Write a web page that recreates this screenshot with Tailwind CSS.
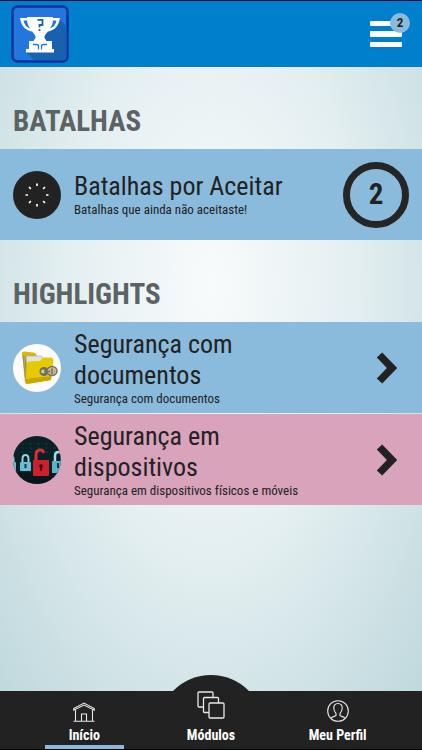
<!DOCTYPE html>
<html lang="pt">
<head>
<meta charset="utf-8">
<meta name="viewport" content="width=device-width, initial-scale=1">
<title>Batalhas</title>
<script src="https://cdn.jsdelivr.net/npm/@tailwindcss/browser@4"></script>
</head>
<body class="min-h-screen flex flex-col text-[#222222] font-['Roboto_Condensed','Liberation_Sans_Narrow',Roboto,sans-serif] bg-[radial-gradient(ellipse_75%_80%_at_50%_38%,#f8fbfc_0%,#e4eff1_45%,#bcd6da_100%)]">

<header class="flex items-center justify-between h-[67px] border-t border-[#08143f] bg-[#007fcd] pl-[11px] pr-5">
  <a href="#" aria-label="Início da aplicação">
    <svg class="block w-[58px] h-[58px]" viewBox="0 0 58 58">
      <rect x="1.5" y="1.5" width="55" height="55" rx="5" fill="#2377dc" stroke="#07339b" stroke-width="2.5"/>
      <path d="M48 14 55.300 21V52q0 3.300-3 3.300H23L15 47 30 35z" fill="#1761b0"/>
      <path d="M16 12H42V13H49C48 21 43 25.500 37 26.500C34.500 29 33 31 33.500 33L35.500 36H41V44H43V47.500H15V44H18V36H22.500L24.500 33C25 31 23.500 29 21 26.500C15 25.500 10 21 9 13H16z" fill="#fff"/>
      <path d="M12.500 15.500H16C16.500 19 17.500 21 19 23.500C15.500 22 13.500 20 12.500 15.500zM45.500 15.500H42C41.500 19 40.500 21 39 23.500C42.500 22 44.500 20 45.500 15.500z" fill="#2377dc"/>
      <path d="M26.500 14.800H31.500V20H28.500V22.500M28.500 24V26" fill="none" stroke="#1c62bb" stroke-width="1.800"/>
      <path d="M22 39.500H25.500Q27.500 39.500 27.500 41.500V44.500M36 39.500H32.500Q30.500 39.500 30.500 41.500V44.500" fill="none" stroke="#2377dc" stroke-width="1.300"/>
    </svg>
  </a>
  <button type="button" aria-label="Menu, 2 notificações" class="relative flex flex-col gap-[5px] w-8">
    <span class="block h-[5px] w-full rounded-[1px] bg-white"></span>
    <span class="block h-[6px] w-full rounded-[1px] bg-white"></span>
    <span class="block h-[5px] w-full rounded-[1px] bg-white"></span>
    <span class="absolute -top-2 -right-2 flex size-5 items-center justify-center rounded-full bg-[#8abbdc] text-[13px] leading-4 font-bold">2</span>
  </button>
</header>

<main class="grow">
  <section>
    <h2 class="pt-[39px] pb-[13px] pl-[13px] text-[29px] leading-[30px] font-bold text-[#5d6264]">BATALHAS</h2>
    <a href="#" class="flex min-h-[91px] items-center bg-[#8bbbdc] pl-[13px] pr-[13px]">
      <svg class="size-12 shrink-0" viewBox="0 0 48 48">
        <circle cx="24" cy="24" r="24" fill="#222"/>
        <path d="M24 12.500v2.500M24 33v2.500M12.500 24h2.500M33 24h2.500M16 16l1.800 1.800M30.200 30.200l1.800 1.800M32 16l-1.800 1.800M17.800 30.200l-1.800 1.800" stroke="#fff" stroke-width="1.700"/>
      </svg>
      <span class="grow pl-[13px]">
        <span class="block text-[26px] leading-[31px]">Batalhas por Aceitar</span>
        <span class="block text-[13px] leading-4">Batalhas que ainda não aceitaste!</span>
      </span>
      <span class="flex size-[66px] shrink-0 items-center justify-center rounded-full border-[7px] border-[#252525] text-[29px] font-bold">2</span>
    </a>
  </section>

  <section>
    <h2 class="pt-[39px] pb-[13px] pl-[13px] text-[29px] leading-[30px] font-bold text-[#5d6264]">HIGHLIGHTS</h2>
    <div class="flex flex-col gap-px">
      <a href="#" class="flex min-h-[91px] items-center bg-[#8bbbdc] pl-[13px] pr-6">
        <svg class="size-12 shrink-0" viewBox="0 0 48 48">
          <circle cx="24" cy="24" r="24" fill="#fcfcfc"/>
          <path d="M9 9Q9 7.500 11 7.500L20 8.500Q23 8.500 24 12L22 34 12 39z" fill="#d8b800"/>
          <path d="M10 11 13 38M12 12 14 38" stroke="#8e8e82" stroke-width="1"/>
          <path d="M13 12 29 12 30 20 14 20z" fill="#e1e2e4" stroke="#aaa" stroke-width=".5"/>
          <path d="M14 19Q14 17.500 16 17.500L27 17 30 13.500 38 13.500Q40.500 14 40.500 17L38 36 14 40Q12.500 40 12.500 38z" fill="#e7c900"/>
          <path d="M13 35 38.300 32 38 36 14 40Q12.500 40 12.500 38z" fill="#c9a600"/>
          <circle cx="31" cy="27.500" r="4.500" fill="#716d5b"/>
          <circle cx="30" cy="27.500" r="2" fill="#c9c7bb"/>
          <ellipse cx="39" cy="27" rx="5" ry="4.500" fill="#c1b995" stroke="#77735f" stroke-width="1.500"/>
          <path d="M31 27.500H37M39 24.500V30" stroke="#77735f" stroke-width="1.500"/>
        </svg>
        <span class="w-[220px] pl-[13px]">
          <span class="block text-[26px] leading-[31px]">Segurança com documentos</span>
          <span class="block text-[13px] leading-4 whitespace-nowrap">Segurança com documentos</span>
        </span>
        <svg class="ml-auto w-[22px] h-8 shrink-0" viewBox="0 0 22 32"><path d="M3.500 3 16 16 3.500 29" fill="none" stroke="#222" stroke-width="7.500"/></svg>
      </a>
      <a href="#" class="flex min-h-[91px] items-center bg-[#d8a3bb] pl-[13px] pr-6">
        <svg class="size-12 shrink-0" viewBox="0 0 48 48">
          <defs>
            <clipPath id="disc"><circle cx="24" cy="24" r="24"/></clipPath>
            <g id="padlock"><path d="M2.500 8V5Q2.500 1 5.500 1T8.500 5V8" fill="none" stroke="#8ed6e1" stroke-width="2"/><rect y="8" width="11" height="9" rx="1" fill="#65bfd0"/><path d="M5.500 10V14" stroke="#14323d" stroke-width="2"/></g>
          </defs>
          <g clip-path="url(#disc)">
            <rect width="48" height="48" fill="#092027"/>
            <path d="M0 8H48M0 12H48M0 16H48M0 36H48M0 40H48" stroke="#16383d" stroke-width="1" stroke-dasharray="3 2 1 2"/>
            <path d="M0 36H48V48H0z" fill="#061016" opacity=".6"/>
            <use href="#padlock" x="7" y="18"/>
            <use href="#padlock" x="-8" y="18"/>
            <path d="M42 25V20Q42 16 45.500 16T49 20V25" fill="none" stroke="#9de1e8" stroke-width="2.500"/>
            <rect x="39" y="25" width="12" height="12" fill="#58b5c8"/><path d="M45 27V32" stroke="#14323d" stroke-width="2"/>
            <path d="M23 25V19Q23 14 27 14T30 17" fill="none" stroke="#df2b32" stroke-width="3"/>
            <rect x="20" y="24" width="16" height="16" rx="1" fill="#cc202a"/>
            <circle cx="28" cy="30" r="1.800" fill="#37080d"/><path d="M28 30V35" stroke="#37080d" stroke-width="1.700"/>
          </g>
        </svg>
        <span class="w-[220px] pl-[13px]">
          <span class="block text-[26px] leading-[31px]">Segurança em dispositivos</span>
          <span class="block text-[13px] leading-4 whitespace-nowrap">Segurança em dispositivos físicos e móveis</span>
        </span>
        <svg class="ml-auto w-[22px] h-8 shrink-0" viewBox="0 0 22 32"><path d="M3.500 3 16 16 3.500 29" fill="none" stroke="#222" stroke-width="7.500"/></svg>
      </a>
    </div>
  </section>
</main>

<nav class="sticky bottom-0 border-b border-black bg-[#222222] px-[21px] text-white">
  <span class="absolute left-1/2 -top-4 size-[106px] -translate-x-1/2 rounded-full bg-[#222222] [clip-path:inset(0_0_80px_0)]"></span>
  <div class="relative grid h-[58px] grid-cols-3 text-[14px] leading-4 font-bold">
    <a href="#" aria-current="page" class="flex flex-col items-center justify-end">
      <svg class="mb-[5px] w-[22px] h-5" viewBox="0 0 22 20" fill="none" stroke="#e8e8e8" stroke-width="1.100"><path d="M.8 6.500 11 1 21.200 6.500V8.200L11 3 .8 8.200zM2.500 8V19M19.500 8V19M.5 19.300H21.500M8.500 19V12H13.500V19"/></svg>
      <span>Início</span>
      <span class="mt-[2px] block h-1 w-[79px] bg-[#8bbbdc]"></span>
    </a>
    <a href="#" class="flex flex-col items-center justify-end pb-[6px]">
      <svg class="mb-[8px] size-7" viewBox="0 0 28 28" stroke="#e8e8e8" stroke-width="1.300" fill="#222"><rect x="1" y="1" width="15" height="15" rx="1"/><rect x="6.500" y="6.500" width="15" height="15" rx="1"/><rect x="12" y="12" width="15" height="15" rx="1"/></svg>
      <span>Módulos</span>
    </a>
    <a href="#" class="flex flex-col items-center justify-end pb-[6px]">
      <svg class="mb-[5px] size-[22px]" viewBox="0 0 22 22" fill="none" stroke="#e8e8e8" stroke-width="1.100"><circle cx="11" cy="11" r="10.300"/><path d="M11 3.500C8 3.500 6.500 5.500 6.800 8.500C7 11 8 12.500 9 13.500V15.500C7.500 16.500 5.500 16.500 4 18.200M11 3.500C14 3.500 15.500 5.500 15.200 8.500C15 11 14 12.500 13 13.500V15.500C14.500 16.500 16.500 16.500 18 18.200"/></svg>
      <span>Meu Perfil</span>
    </a>
  </div>
</nav>
</body>
</html>
